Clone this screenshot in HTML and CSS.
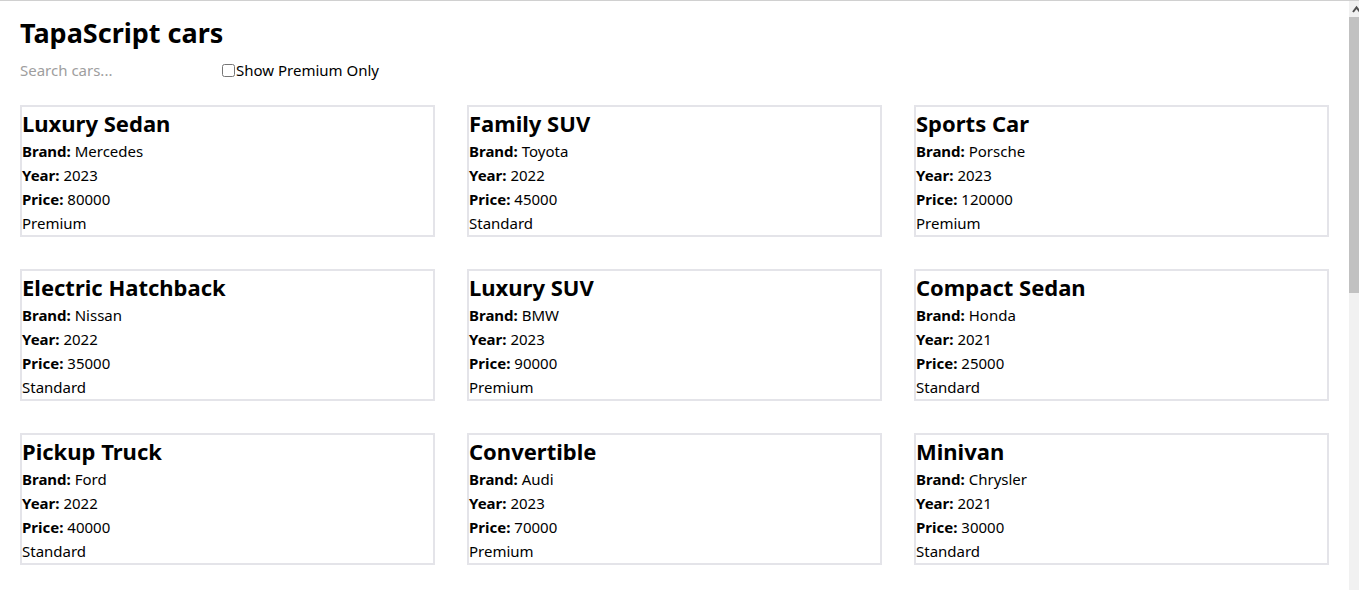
FILE: index.html
```html
<!DOCTYPE html>
<html lang="en">
<head>
<meta charset="utf-8">
<title>TapaScript cars</title>
<link rel="stylesheet" href="styles.css">
</head>
<body>
<h1 class="title">TapaScript cars</h1>
<div class="filters">
  <input class="search" type="text" placeholder="Search cars...">
  <label class="premium"><input class="check" type="checkbox">Show Premium Only</label>
</div>
<div class="grid">
  <div class="card"><h2 class="name">Luxury Sedan</h2><p class="line"><b>Brand:</b> Mercedes</p><p class="line"><b>Year:</b> 2023</p><p class="line"><b>Price:</b> 80000</p><p class="line">Premium</p></div>
  <div class="card"><h2 class="name">Family SUV</h2><p class="line"><b>Brand:</b> Toyota</p><p class="line"><b>Year:</b> 2022</p><p class="line"><b>Price:</b> 45000</p><p class="line">Standard</p></div>
  <div class="card"><h2 class="name">Sports Car</h2><p class="line"><b>Brand:</b> Porsche</p><p class="line"><b>Year:</b> 2023</p><p class="line"><b>Price:</b> 120000</p><p class="line">Premium</p></div>
  <div class="card"><h2 class="name">Electric Hatchback</h2><p class="line"><b>Brand:</b> Nissan</p><p class="line"><b>Year:</b> 2022</p><p class="line"><b>Price:</b> 35000</p><p class="line">Standard</p></div>
  <div class="card"><h2 class="name">Luxury SUV</h2><p class="line"><b>Brand:</b> BMW</p><p class="line"><b>Year:</b> 2023</p><p class="line"><b>Price:</b> 90000</p><p class="line">Premium</p></div>
  <div class="card"><h2 class="name">Compact Sedan</h2><p class="line"><b>Brand:</b> Honda</p><p class="line"><b>Year:</b> 2021</p><p class="line"><b>Price:</b> 25000</p><p class="line">Standard</p></div>
  <div class="card"><h2 class="name">Pickup Truck</h2><p class="line"><b>Brand:</b> Ford</p><p class="line"><b>Year:</b> 2022</p><p class="line"><b>Price:</b> 40000</p><p class="line">Standard</p></div>
  <div class="card"><h2 class="name">Convertible</h2><p class="line"><b>Brand:</b> Audi</p><p class="line"><b>Year:</b> 2023</p><p class="line"><b>Price:</b> 70000</p><p class="line">Premium</p></div>
  <div class="card"><h2 class="name">Minivan</h2><p class="line"><b>Brand:</b> Chrysler</p><p class="line"><b>Year:</b> 2021</p><p class="line"><b>Price:</b> 30000</p><p class="line">Standard</p></div>
</div>
<div class="scrollbar" aria-hidden="true">
  <div class="scroll-up"><svg width="10" height="16" viewBox="0 0 10 16"><path d="M4 11 L7.5 6.5 L11 11" fill="none" stroke="#505050" stroke-width="2"/></svg></div>
  <div class="scroll-thumb"></div>
</div>
</body>
</html>
```
FILE: styles.css
```css
body {
  margin: 0;
  padding: 14px 30px 0 20px;
  border-top: 1px solid #d0d0d0;
  font-family: "Noto Sans", sans-serif;
  font-size: 15px;
  color: #000;
  background: #fff;
}

.title {
  margin: 0 0 7px;
  font-size: 27px;
  line-height: 36px;
  font-weight: 700;
}

.filters {
  display: flex;
  align-items: center;
  height: 24px;
  margin-bottom: 23px;
}

.search {
  width: 198px;
  padding: 0;
  border: 0;
  outline: none;
  font-family: inherit;
  font-size: 15px;
  line-height: 24px;
  height: 24px;
  background: transparent;
}
.search::placeholder { color: #9e9e9e; }

.premium {
  display: flex;
  align-items: center;
  line-height: 24px;
}
.check {
  width: 13px;
  height: 13px;
  margin: 0 1px 0 4px;
}

.grid {
  display: grid;
  grid-template-columns: repeat(3, 1fr);
  gap: 32px;
}

.card {
  border: 2px solid #e4e4e9;
  height: 132px;
  box-sizing: border-box;
}

.name {
  margin: 0;
  padding-top: 1px;
  font-size: 22px;
  line-height: 31px;
  font-weight: 700;
}

.line {
  margin: 0;
  line-height: 24px;
}

.scrollbar {
  position: fixed;
  top: 1px;
  right: 0;
  bottom: 0;
  width: 10px;
  background: #f1f1f1;
  display: flex;
  flex-direction: column;
}
.scroll-up {
  height: 16px;
  display: flex;
}
.scroll-thumb {
  height: 276px;
  background: #c1c1c1;
}
```
